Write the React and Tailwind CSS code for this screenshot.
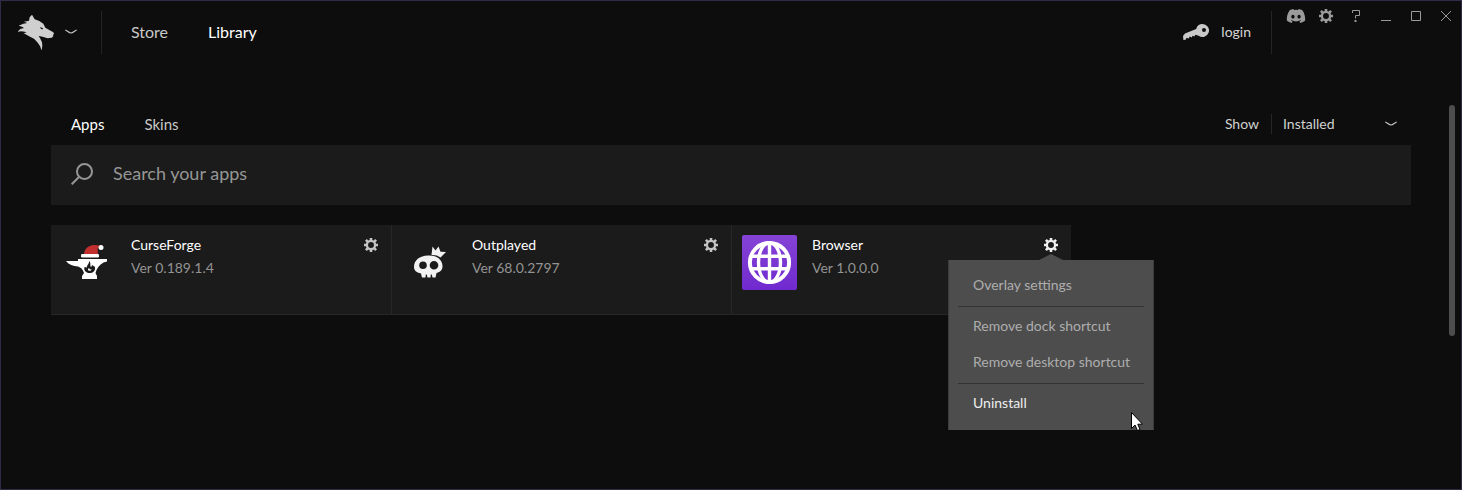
import { useState } from "react";
import { FaDiscord } from "react-icons/fa";

const apps = [
  { id: "curseforge", name: "CurseForge", version: "Ver 0.189.1.4", icon: AnvilIcon },
  { id: "outplayed", name: "Outplayed", version: "Ver 68.0.2797", icon: SkullIcon },
  { id: "browser", name: "Browser", version: "Ver 1.0.0.0", icon: GlobeIcon },
];

function WolfLogo() {
  return (
    <svg viewBox="18 18 108 108" className="size-9" fill="#cfcfcf" aria-hidden="true">
      <path
        fillRule="evenodd"
        d="M60 20 L68 34 L82 39 L94 47 L100 59 L112 66 L124 73 L126 77 L123 81 L124 85 L119 89 L107 91 L92 86 L80 84 L85 92 L90 103 L91 113 L89 128 L84 114 L76 103 L66 92 L54 86 L34 75 L44 74 L38 71 L28 70 L17 71 L25 63 L36 60 L30 56 L20 53 L34 47 L46 45 L36 41 L51 38 L53 28 Z M84 58 L87 63 L93 64 L92 60 Z"
      />
    </svg>
  );
}

function Chevron({ className }) {
  return (
    <svg viewBox="0 0 12 6" className={`h-1.5 w-3 ${className || ""}`} fill="none" stroke="#c8c8c8" strokeWidth="1.2" aria-hidden="true">
      <path d="M0.3 1.2 C2 1.4 4 4 6 4 S10 1.4 11.7 1.2" />
    </svg>
  );
}

function GearIcon({ className }) {
  return (
    <svg viewBox="0 0 14 14" className={className} fill="none" stroke="currentColor" aria-hidden="true">
      <circle cx="7" cy="7" r="4.1" strokeWidth="2.3" />
      <path
        strokeWidth="2.6"
        d="M7 0V2.6M7 11.4V14M0 7H2.6M11.4 7H14M1.9 1.9L3.9 3.9M10.1 10.1L12.1 12.1M1.9 12.1L3.9 10.1M10.1 3.9L12.1 1.9"
      />
    </svg>
  );
}

function KeyIcon() {
  return (
    <svg viewBox="0 0 26 18" className="h-[18px] w-[26px]" fill="#c9c9c9" aria-hidden="true">
      <path
        fillRule="evenodd"
        d="M19.5 1 A6.5 6.5 0 1 1 15.6 12.7 L12.5 11.7 L11.2 13.4 L9.6 12.8 L8.6 14.4 L6.8 13.6 L5.6 15.6 L3.6 14.8 L2.6 16.8 L0.4 17 L0 13 L2 10.4 L13.2 6 A6.5 6.5 0 0 1 19.5 1 Z M21 5 A2 2 0 1 0 21 9 A2 2 0 1 0 21 5 Z"
      />
    </svg>
  );
}

function AnvilIcon() {
  return (
    <svg viewBox="0 0 55 55" className="size-[55px]" aria-hidden="true">
      <path fill="#c22f2f" d="M23 19 C23.5 14 27 10.5 33 10 L39 10.5 L36.5 13.5 L37 19 Z" />
      <rect x="20" y="19" width="18" height="3.4" rx="1.2" fill="#fff" />
      <circle cx="40" cy="12.5" r="2.5" fill="#fff" />
      <path
        fill="#fff"
        d="M17 24 H46 V26.5 C41 27.5 37.5 30.5 35.5 35 L34.5 38 L36 41 V44 H21 V41 L23 38 C22 34.5 20 32.5 17 31.5 C12 31 8 30 5 26 H17 Z"
      />
      <path
        fill="#1b1b1b"
        d="M28 26 C30.5 28 28.5 30 30 32 C31 31.5 31 30.5 30.8 29.8 L34 32 C34.5 36 32 38 28.5 38 C25 38 22.5 35.5 23.5 32 L26 32.5 C25.5 30 28.5 29 28 26 Z"
      />
      <path fill="#fff" d="M28 33 L29 34.5 L30.4 34 C30.4 35.4 29.4 35.9 28.4 35.8 C27.2 35.7 26.7 34.9 27 34 Z" />
    </svg>
  );
}

function SkullIcon() {
  return (
    <svg viewBox="0 0 55 55" className="size-[55px]" fill="#f2f2f2" aria-hidden="true">
      <path
        fillRule="evenodd"
        d="M26 20.5 C35 20 40.5 25 40.5 31 C40.5 35 38.5 36.5 36 37.5 L34.5 38 L33.5 42.5 L30.5 42.5 L29.8 39.5 L28.8 39.5 L28.5 42.5 L25.5 42.5 L24.8 39.5 L23.8 39.5 L23.5 42.5 L20 42.5 L19 38.5 C15 37.5 12 36 12 32 C12 25 17.5 21 26 20.5 Z M21 26.5 A3.8 3.8 0 1 0 21 34.1 A3.8 3.8 0 1 0 21 26.5 Z M32 26 A4.3 4.3 0 1 0 32 34.6 A4.3 4.3 0 1 0 32 26 Z"
      />
      <path d="M29.5 20 L30.5 11.5 L33.5 15.5 L36.5 11.5 L38.5 16.8 L44 17 L38.5 22.5 C36 20.5 33 19.8 29.5 20 Z" />
    </svg>
  );
}

function GlobeIcon() {
  return (
    <svg viewBox="0 0 55 55" className="size-[55px] rounded-xs bg-linear-to-b from-[#8543d6] to-[#7029cf]" fill="none" stroke="#fff" aria-hidden="true">
      <circle cx="27.5" cy="27.5" r="19.6" strokeWidth="4" />
      <ellipse cx="27.5" cy="27.5" rx="11" ry="19.8" strokeWidth="3.4" />
      <path strokeWidth="3.4" d="M27.5 7V48M10 21.3H45M10 33.7H45" />
    </svg>
  );
}

function WindowButton({ label, children }) {
  return (
    <button aria-label={label} className="flex size-[30px] items-center justify-center text-[#9b9b9b]">
      {children}
    </button>
  );
}

function WindowControls() {
  return (
    <div className="ml-[9px] flex self-start">
      <WindowButton label="Discord">
        <FaDiscord className="size-5" />
      </WindowButton>
      <WindowButton label="Settings">
        <GearIcon className="size-3.5" />
      </WindowButton>
      <WindowButton label="Help">
        <svg viewBox="0 0 8 12" className="h-3 w-2" fill="none" stroke="currentColor" aria-hidden="true">
          <path d="M0.5 3V0.5H7.5V5.5H3.5V8.5" />
          <path d="M2.5 11H4.5" strokeWidth="2" />
        </svg>
      </WindowButton>
      <WindowButton label="Minimize">
        <svg viewBox="0 0 10 10" className="size-2.5" stroke="currentColor" aria-hidden="true">
          <path d="M0 9.5H10" />
        </svg>
      </WindowButton>
      <WindowButton label="Maximize">
        <svg viewBox="0 0 10 10" className="size-2.5" fill="none" stroke="currentColor" aria-hidden="true">
          <path d="M0.5 0.5H9.5V9.5H0.5Z" />
        </svg>
      </WindowButton>
      <WindowButton label="Close">
        <svg viewBox="0 0 10 10" className="size-2.5" stroke="currentColor" aria-hidden="true">
          <path d="M0 0L10 10M10 0L0 10" />
        </svg>
      </WindowButton>
    </div>
  );
}

function Header() {
  return (
    <header className="flex h-[53px] items-end">
      <button aria-label="Main menu" className="flex h-[43px] items-center gap-[11px] pr-6 pb-0.5 pl-[17px]">
        <WolfLogo />
        <Chevron />
      </button>
      <nav className="flex h-[43px] items-center gap-10 border-l border-[#242424] pb-0.5 pl-[29px] text-base">
        <a href="#store" className="text-[#c8c8c8]">Store</a>
        <a href="#library" className="text-white">Library</a>
      </nav>
      <button className="ml-auto flex h-[43px] items-center gap-3 border-r border-[#242424] pr-5 pb-0.5 text-sm text-[#d5d5d5]">
        <KeyIcon />
        login
      </button>
      <WindowControls />
    </header>
  );
}

function AppMenu() {
  const item = "block h-9 w-full pl-6 text-left whitespace-nowrap";

  return (
    <div className="absolute top-[35px] right-[-83px] z-10 w-[206px] border-x border-[#3c3c3c] bg-[#4d4d4d] pt-[7px] pb-[9px] text-sm text-[#adadad]">
      <svg viewBox="0 0 24 6" className="absolute -top-1.5 left-[90px] h-1.5 w-6" fill="#4d4d4d" aria-hidden="true">
        <path d="M0 6L12 0L24 6Z" />
      </svg>
      <button className={item}>Overlay settings</button>
      <hr className="mx-[9px] mt-[3px] mb-px border-[#333333]" />
      <button className={item}>Remove dock shortcut</button>
      <button className={item}>Remove desktop shortcut</button>
      <hr className="mx-[9px] mt-[3px] mb-px border-[#333333]" />
      <button className={`${item} text-[#eeeeee]`}>Uninstall</button>
      {/* pointer */}
      <svg viewBox="0 0 12 18" className="absolute right-2.5 bottom-0 h-[18px] w-3" fill="#fff" stroke="#000" aria-hidden="true">
        <path d="M0.5 0.5V16.5L4 13L6.5 18.5L9 17.5L6.8 12.2H11.5Z" />
      </svg>
    </div>
  );
}

function AppCard({ app, open, onToggle }) {
  const Icon = app.icon;

  return (
    <li className="relative flex h-[90px] gap-[15px] border-b border-[#272727] bg-[#1b1b1b] pt-2.5 pr-[13px] pl-2.5 not-first:border-l">
      <Icon />
      <div className="flex-1">
        <h2 className="text-sm text-white">{app.name}</h2>
        <p className="mt-[3px] text-sm text-[#939393]">{app.version}</p>
      </div>
      <button
        aria-label={`${app.name} options`}
        aria-expanded={open}
        onClick={onToggle}
        className={`flex h-5 items-center self-start ${open ? "text-[#f0f0f0]" : "text-[#c4c4c4]"}`}
      >
        <GearIcon className="size-3.5" />
      </button>
      {open && <AppMenu />}
    </li>
  );
}

export default function App() {
  const [openMenu, setOpenMenu] = useState("browser");
  const [search, setSearch] = useState("");
  const [tab, setTab] = useState("Apps");

  const shown = apps.filter((app) =>
    app.name.toLowerCase().includes(search.toLowerCase()),
  );

  return (
    <div className="relative min-h-screen border border-[#2f2c48] bg-[#0d0d0d] font-['Lato',sans-serif]">
      <Header />

      <main className="px-[50px] pt-[51px]">
        <div className="flex h-10 items-center justify-between pb-0.5 pl-5">
          <div className="flex gap-10 text-[15px]">
            {["Apps", "Skins"].map((name) => (
              <button
                key={name}
                onClick={() => setTab(name)}
                className={tab === name ? "text-white" : "text-[#c8c8c8]"}
              >
                {name}
              </button>
            ))}
          </div>

          <div className="flex items-center text-sm text-[#d0d0d0]">
            <label htmlFor="show" className="pr-3">Show</label>
            <div className="relative flex w-[140px] items-center border-l border-[#262626]">
              <select id="show" className="w-full appearance-none bg-transparent pl-[11px]">
                <option>Installed</option>
                <option>All</option>
              </select>
              <Chevron className="pointer-events-none absolute right-3.5" />
            </div>
          </div>
        </div>

        <div className="flex h-[60px] items-center gap-5 bg-[#1b1b1b] px-5 pb-0.5">
          <svg viewBox="0 0 22 22" className="size-[22px]" fill="none" stroke="#969696" strokeWidth="2" aria-hidden="true">
            <circle cx="13.5" cy="8.5" r="7.5" />
            <path d="M8 14L0.7 21.3" />
          </svg>
          <input
            type="text"
            aria-label="Search your apps"
            placeholder="Search your apps"
            value={search}
            onChange={(e) => setSearch(e.target.value)}
            className="flex-1 bg-transparent pb-0.5 text-lg text-white outline-none placeholder:text-[#969696]"
          />
        </div>

        <ul className="mt-5 grid grid-cols-4">
          {shown.map((app) => (
            <AppCard
              key={app.id}
              app={app}
              open={openMenu === app.id}
              onToggle={() => setOpenMenu(openMenu === app.id ? null : app.id)}
            />
          ))}
        </ul>
      </main>

      {/* scrollbar thumb */}
      <div className="absolute top-[104px] right-1.5 h-[231px] w-1.5 rounded-full bg-[#4d4d4d]" />
    </div>
  );
}
